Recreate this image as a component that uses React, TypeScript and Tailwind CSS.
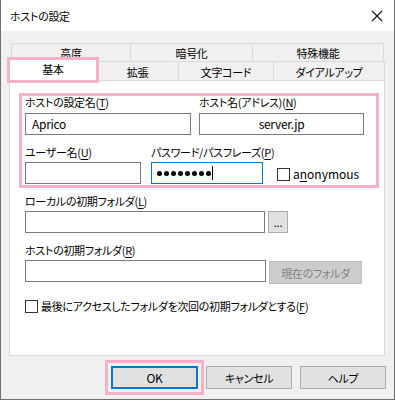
const font = "[font-family:'Noto_Sans_CJK_JP','Noto_Sans',sans-serif] [font-feature-settings:'palt']";

function U({ c }: { c: string }) {
  return <span className="underline underline-offset-2">{c}</span>;
}

function Box({ className = "" }: { className?: string }) {
  return <div className={`h-[13px] w-[13px] shrink-0 border border-[#333] bg-white ${className}`} />;
}

export default function App() {
  return (
    <div
      className={`${font} relative h-[400px] w-[395px] whitespace-nowrap border-x border-b border-[#6f6f6f] bg-[#f0f0f0] text-[11px] leading-[14px] tracking-[-0.3px] text-black`}
    >
      {/* title bar */}
      <div className="flex h-[31px] items-center justify-between bg-white pl-[9px] pr-[9px]">
        <span>ホストの設定</span>
        <svg width="12" height="12" viewBox="0 0 12 12" className="mr-[2px]">
          <path d="M1 1 L11 11 M11 1 L1 11" stroke="#111" strokeWidth="1.1" />
        </svg>
      </div>

      {/* tabs */}
      <div className="mt-[12px] px-[8px]">
        <div className="ml-[2px] flex h-[18px] w-[373px]">
          {[
            ["高度", "w-[120px]"],
            ["暗号化", "w-[122px]"],
            ["特殊機能", "w-[131px]"],
          ].map(([t, w], i) => (
            <div
              key={t}
              className={`${w} flex items-center justify-center border-t border-r border-[#d9d9d9] ${i === 0 ? "border-l" : ""}`}
            >
              <span>{t}</span>
            </div>
          ))}
        </div>
        <div className="relative flex h-[19px]">
          <div className="w-[88px]" />
          {[
            ["拡張", "w-[82px]"],
            ["文字コード", "w-[95px]"],
            ["ダイアルアップ", "w-[111px]"],
          ].map(([t, w]) => (
            <div key={t} className={`${w} flex items-center justify-center border-t border-r border-[#d9d9d9]`}>
              <span className="mt-[1px]">{t}</span>
            </div>
          ))}
          <div className="absolute left-[-2px] top-[-4px] z-10 flex h-[26px] w-[92px] items-start justify-center border-[3px] border-[#f5b0ca] bg-white">
            <span className="mt-[2px]">基本</span>
          </div>
        </div>

        {/* panel */}
        <div className="h-[276px] w-[376px] border border-[#d9d9d9] bg-white pl-[9px] pt-[12px]">
          <div className="h-[95px] w-[360px] border-[3px] border-[#f5b0ca] pl-[3px]">
            <div className="flex">
              <div className="w-[174px]">
                <div className="-mt-[1px]">
                  ホストの設定名(<U c="T" />)
                </div>
                <div className="mt-[4px] flex h-[22px] w-[166px] items-center border border-[#7a7a7a] pl-[6px] text-[12px]">
                  Aprico
                </div>
              </div>
              <div>
                <div className="-mt-[1px]">
                  ホスト名(アドレス)(<U c="N" />)
                </div>
                <div className="mt-[4px] flex h-[22px] w-[165px] items-center justify-center border border-[#7a7a7a] text-[12px]">
                  server.jp
                </div>
              </div>
            </div>
            <div className="mt-[10px] flex">
              <div className="w-[126px]">
                <div>
                  ユーザー名(<U c="U" />)
                </div>
                <div className="mt-[3px] h-[22px] w-[116px] border border-[#7a7a7a]" />
              </div>
              <div className="w-[126px]">
                <div>
                  パスワード/パスフレーズ(<U c="P" />)
                </div>
                <div className="mt-[3px] flex h-[22px] w-[112px] items-center border border-[#0078d7] pl-[5px]">
                  <div className="flex gap-[2px]">
                    {[0, 1, 2, 3, 4, 5, 6, 7].map((i) => (
                      <div key={i} className="h-[5px] w-[5px] rounded-full bg-black" />
                    ))}
                  </div>
                  <span className="ml-[1px] h-[14px] w-[1px] bg-black" />
                </div>
              </div>
              <div className="mt-[19px] flex items-center">
                <Box />
                <span className="ml-[3px] text-[12px] tracking-normal">
                  a<U c="n" />onymous
                </span>
              </div>
            </div>
          </div>

          <div className="ml-[6px] mt-[6px]">
            <div>
              ローカルの初期フォルダ(<U c="L" />)
            </div>
            <div className="mt-[3px] flex items-start">
              <div className="h-[22px] w-[240px] border border-[#7a7a7a]" />
              <div className="ml-[3px] flex h-[22px] w-[20px] items-center justify-center border border-[#adadad] bg-[#e1e1e1] text-[11px] leading-[10px]">
                ...
              </div>
            </div>
            <div className="mt-[10px]">
              ホストの初期フォルダ(<U c="R" />)
            </div>
            <div className="mt-[3px] flex items-start">
              <div className="h-[22px] w-[241px] border border-[#7a7a7a]" />
              <div className="ml-[3px] mt-[1px] flex h-[23px] w-[93px] items-center justify-center border border-[#bfbfbf] bg-[#cccccc] text-[#838383]">
                現在のフォルダ
              </div>
            </div>
            <div className="mt-[15px] flex items-center">
              <Box />
              <span className="ml-[3px]">
                最後にアクセスしたフォルダを次回の初期フォルダとする(<U c="F" />)
              </span>
            </div>
          </div>
        </div>

        {/* buttons */}
        <div className="mt-[4px] flex items-start">
          <div className="ml-[96px] border-[3px] border-[#f5b0ca] p-[3px]">
            <div className="flex h-[23px] w-[87px] items-center justify-center border-2 border-[#0078d7] bg-[#e1e1e1] text-[12px]">
              OK
            </div>
          </div>
          <div className="ml-[2px] mt-[6px] flex h-[23px] w-[87px] items-center justify-center border border-[#adadad] bg-[#e1e1e1]">
            キャンセル
          </div>
          <div className="ml-[8px] mt-[6px] flex h-[23px] w-[87px] items-center justify-center border border-[#adadad] bg-[#e1e1e1]">
            ヘルプ
          </div>
        </div>
      </div>
    </div>
  );
}
